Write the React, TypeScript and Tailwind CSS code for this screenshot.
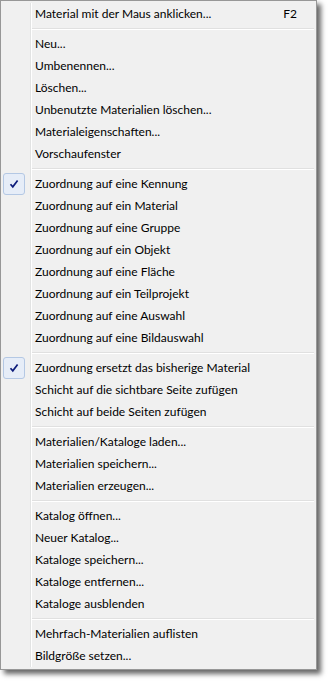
import React from 'react';

type Entry =
  | { kind: 'item'; label: string; shortcut?: string; checked?: boolean }
  | { kind: 'sep' };

const entries: Entry[] = [
  { kind: 'item', label: 'Material mit der Maus anklicken...', shortcut: 'F2' },
  { kind: 'sep' },
  { kind: 'item', label: 'Neu...' },
  { kind: 'item', label: 'Umbenennen...' },
  { kind: 'item', label: 'Löschen...' },
  { kind: 'item', label: 'Unbenutzte Materialien löschen...' },
  { kind: 'item', label: 'Materialeigenschaften...' },
  { kind: 'item', label: 'Vorschaufenster' },
  { kind: 'sep' },
  { kind: 'item', label: 'Zuordnung auf eine Kennung', checked: true },
  { kind: 'item', label: 'Zuordnung auf ein Material' },
  { kind: 'item', label: 'Zuordnung auf eine Gruppe' },
  { kind: 'item', label: 'Zuordnung auf ein Objekt' },
  { kind: 'item', label: 'Zuordnung auf eine Fläche' },
  { kind: 'item', label: 'Zuordnung auf ein Teilprojekt' },
  { kind: 'item', label: 'Zuordnung auf eine Auswahl' },
  { kind: 'item', label: 'Zuordnung auf eine Bildauswahl' },
  { kind: 'sep' },
  { kind: 'item', label: 'Zuordnung ersetzt das bisherige Material', checked: true },
  { kind: 'item', label: 'Schicht auf die sichtbare Seite zufügen' },
  { kind: 'item', label: 'Schicht auf beide Seiten zufügen' },
  { kind: 'sep' },
  { kind: 'item', label: 'Materialien/Kataloge laden...' },
  { kind: 'item', label: 'Materialien speichern...' },
  { kind: 'item', label: 'Materialien erzeugen...' },
  { kind: 'sep' },
  { kind: 'item', label: 'Katalog öffnen...' },
  { kind: 'item', label: 'Neuer Katalog...' },
  { kind: 'item', label: 'Kataloge speichern...' },
  { kind: 'item', label: 'Kataloge entfernen...' },
  { kind: 'item', label: 'Kataloge ausblenden' },
  { kind: 'sep' },
  { kind: 'item', label: 'Mehrfach-Materialien auflisten' },
  { kind: 'item', label: 'Bildgröße setzen...' },
];

// Win7-style check glyph inside the pale blue box
const CheckBox = () => (
  <div className="w-[22px] h-[22px] rounded-[3px] border border-[#b4c8e4] bg-[#e6edf8] flex items-center justify-center">
    <svg width="10" height="10" viewBox="0 0 10 10">
      <path d="M1.5 5.2 L3.8 7.8 L8.6 1.4" fill="none" stroke="#0b1a7a" strokeWidth="1.7" strokeLinejoin="miter" />
    </svg>
  </div>
);

const Row: React.FC<{ entry: Entry }> = ({ entry }) => {
  if (entry.kind === 'sep') {
    return (
      <div className="flex h-[8px]">
        <div className="w-[27px] shrink-0" />
        <div className="w-px bg-[#e2e3e3]" />
        <div className="w-px bg-white" />
        <div className="flex-1 flex flex-col pt-[3px]">
          <div className="h-px bg-[#e0e0e0]" />
          <div className="h-px bg-white" />
        </div>
      </div>
    );
  }
  return (
    <div className="flex h-[22px]">
      <div className="w-[27px] shrink-0 flex items-center">
        {entry.checked && <CheckBox />}
      </div>
      <div className="w-px bg-[#e2e3e3]" />
      <div className="w-px bg-white" />
      <div className="flex-1 flex items-center justify-between pl-[3px] pr-[17px] text-[12px] text-black">
        <span>{entry.label}</span>
        {entry.shortcut && <span>{entry.shortcut}</span>}
      </div>
    </div>
  );
};

export default function App() {
  return (
    <div className="min-h-screen bg-white" style={{ fontFamily: 'Lato, "Noto Sans", sans-serif' }}>
      <div className="w-[317px] border border-[#979797] bg-[#f0f0f0] p-[2px] shadow-[4px_4px_5px_rgba(0,0,0,0.6)]">
        {entries.map((e, i) => (
          <Row key={i} entry={e} />
        ))}
      </div>
    </div>
  );
}
